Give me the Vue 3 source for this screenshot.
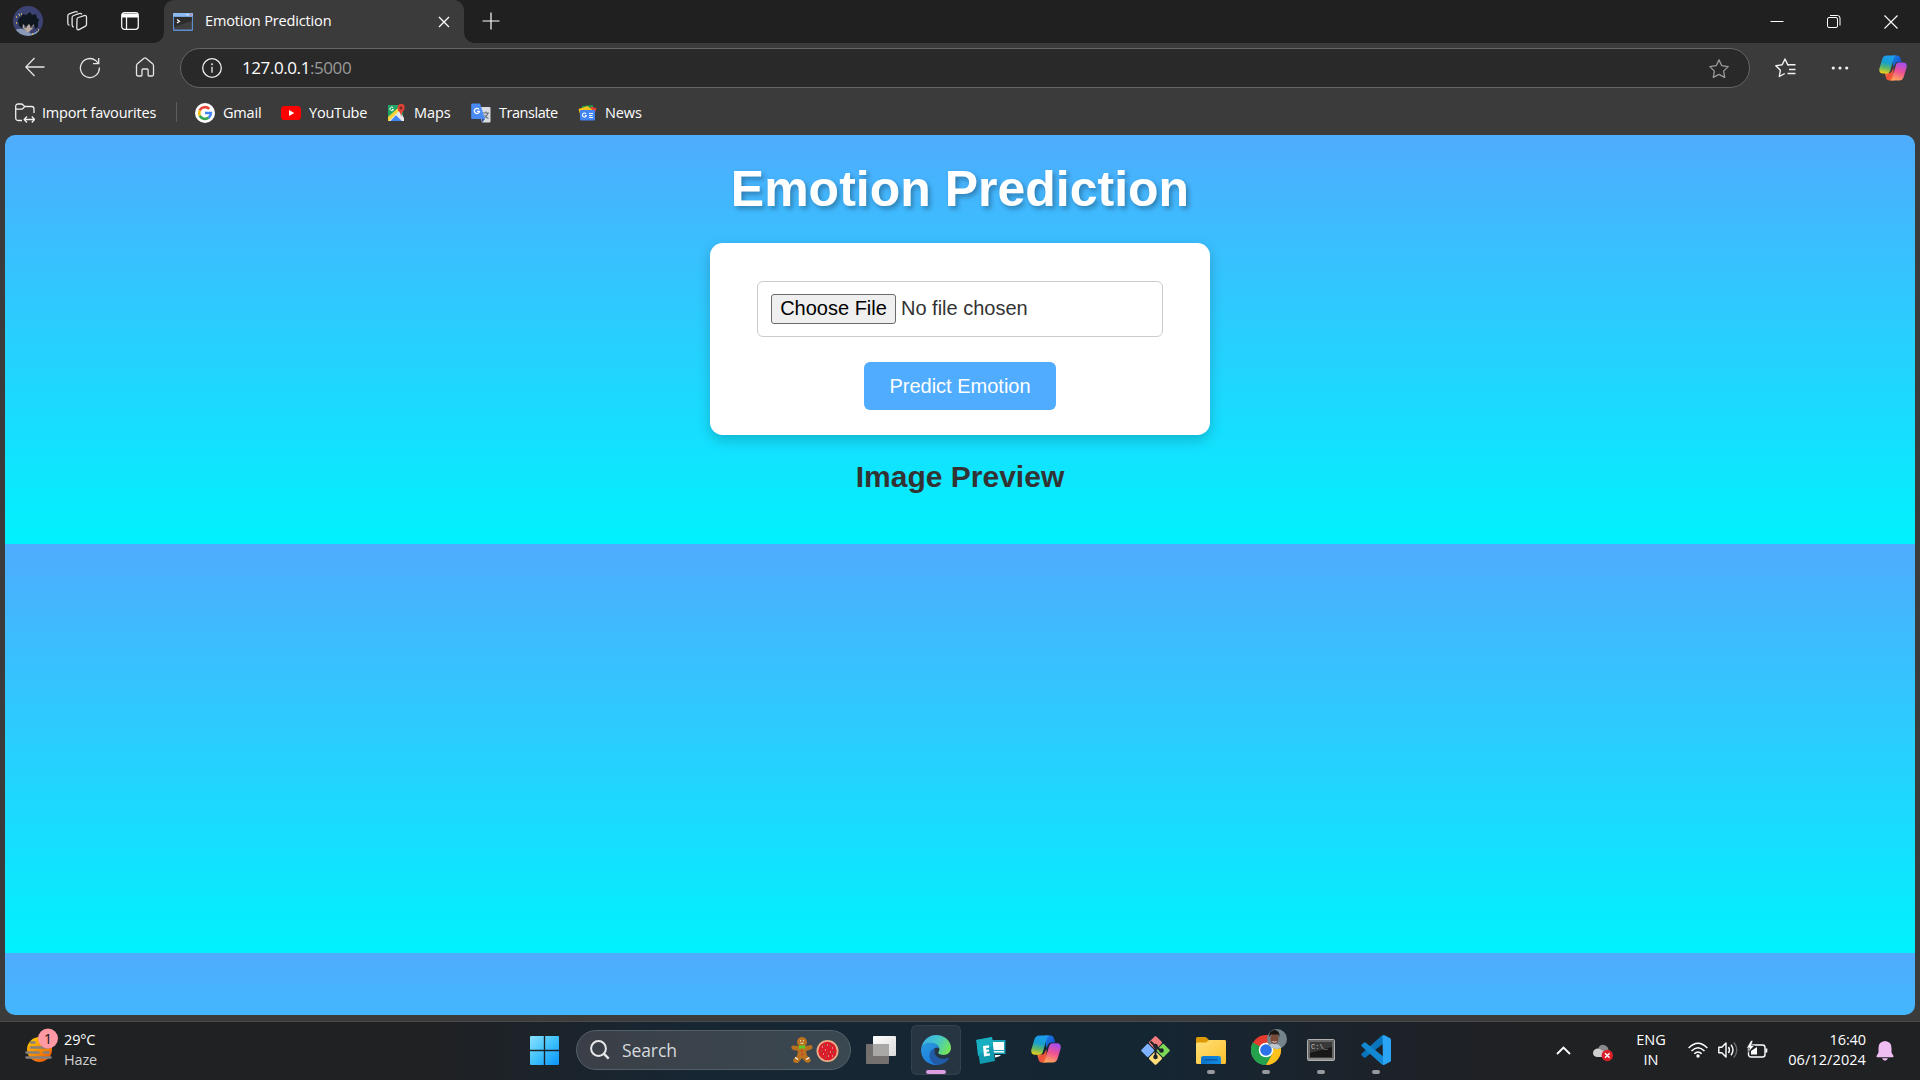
<script setup>
const bookmarks = ['Gmail', 'YouTube', 'Maps', 'Translate', 'News']
</script>

<template>
  <div class="desktop">
    <svg class="defs" width="0" height="0">
      <defs>
        <linearGradient id="cpBlue" x1="0.5" y1="0" x2="0.3" y2="1">
          <stop offset="0" stop-color="#1d9cf0" /><stop offset="0.4" stop-color="#189fcf" /><stop offset="0.7" stop-color="#5fb866" /><stop offset="1" stop-color="#f2cf1b" />
        </linearGradient>
        <linearGradient id="cpPink" x1="0.7" y1="0" x2="0.4" y2="1">
          <stop offset="0" stop-color="#a44df0" /><stop offset="0.5" stop-color="#ee5192" /><stop offset="1" stop-color="#fda45c" />
        </linearGradient>
        <linearGradient id="cpNavy" x1="0" y1="0" x2="1" y2="1">
          <stop offset="0" stop-color="#1c85e8" /><stop offset="1" stop-color="#1240c4" />
        </linearGradient>
        <linearGradient id="cpRed" x1="0" y1="0" x2="1" y2="1">
          <stop offset="0" stop-color="#f8b13c" /><stop offset="0.5" stop-color="#ee4e3a" /><stop offset="1" stop-color="#f0703c" />
        </linearGradient>
        <symbol id="copilot" viewBox="0 0 30 28">
          <path d="M14 .5h5.500c2 0 3 1 3.500 3l1.200 4h-3.600c-2 0-3.100.9-3.700 2.800l-1.600 3z" fill="url(#cpNavy)" />
          <path d="M16 27.500h-5c-2 0-3-1-3.500-3l-1.300-5h4.300c1.800 0 2.800-.7 3.400-2.600l1.500-3z" fill="url(#cpRed)" />
          <path d="M8.500.5h10c-1.500.3-2.300 1.500-2.900 3.500l-3.600 12.600c-.7 2.300-1.700 3.200-4 3.200H4C1 19.800-.3 17.500.4 14.600L3.200 5C4.100 2 5.500.5 8.500.5z" fill="url(#cpBlue)" />
          <path d="M21.500 27.500h-10c1.500-.3 2.300-1.500 2.900-3.500L18 11.400c.7-2.300 1.700-3.200 4-3.200h4c3 0 4.300 2.300 3.600 5.200L26.800 23c-.9 3-2.300 4.500-5.300 4.500z" fill="url(#cpPink)" />
        </symbol>
      </defs>
    </svg>

    <!-- Browser window -->
    <header class="tabstrip">
      <svg class="avatar" viewBox="0 0 30 30">
        <defs><clipPath id="av"><circle cx="15" cy="15" r="15" /></clipPath></defs>
        <g clip-path="url(#av)">
          <rect width="30" height="30" fill="#3c4372" />
          <path d="M0 25q5-3 10-2l9 5 5-3 6 1v4H0z" fill="#8799b4" />
          <path d="M9 17h12l-1 5-4 4h-2l-4-4z" fill="#b9a8a2" />
          <path d="M6 20 5 14l2-3 1 0 2-3 3 1 4-3 2 3 4-1 1 4 2 1-1 4 0 4-3 2-1-5-3 3-2-3-3 3-3-3-1 4z" fill="#10181f" />
          <path d="M11 21h3M17 21h3" stroke="#232b33" />
          <path d="M3 11h1M6 9h1M8 8h1M3 17h1M19 28h1M25 24h1" stroke="#e9c64f" stroke-width="1.300" />
          <path d="M5 8h1M22 27h1" stroke="#58b8e8" />
        </g>
      </svg>
      <svg class="workspaces" viewBox="0 0 22 22" fill="none" stroke="#e4e4e4" stroke-width="1.300" stroke-linejoin="round">
        <path d="M11 9.500q-.1-1.500 1.400-2l5.800-1.900q2.300-.6 2.300 1.600v7.300q0 1.300-1.400 1.900L13 19.600q-2.200.7-2.200-1.500z" />
        <path d="M7.800 17.200q-1.700-.3-1.700-2.500V7.600q0-1.500 1.500-2.100L13 3.600q1.700-.6 3 .6" />
        <path d="M3.500 15.300q-1.700-.3-1.700-2.400V6q0-1.600 1.500-2.200L8.700 1.900q1.700-.6 2.900.4" />
      </svg>
      <svg class="vtabs" viewBox="0 0 18 18" fill="none" stroke="#f4f4f4" stroke-width="1.300">
        <rect x=".7" y=".7" width="16.600" height="16.600" rx="2.800" />
        <path d="M1 1.500h16v4H1z" fill="#fff" stroke="none" /><path d="M5.500 5v12" />
      </svg>
      <div class="tab">
        <svg class="favicon" viewBox="0 0 20 18">
          <rect width="20" height="18" rx="1" fill="#5d8fcf" /><rect y="0" width="20" height="3.500" rx="1" fill="#8fbaf0" />
          <rect x="17" y="1" width="1.500" height="1.500" fill="#d86a6a" /><rect x="13" y="1" width="3" height="1.500" fill="#b8d4f6" />
          <rect x="1.200" y="4" width="17.600" height="12.500" fill="#3f3f3f" /><path d="M1.200 4h17.600v4L1.200 14z" fill="#2c2c2c" />
          <path d="M4 6.500l2.500 1.800L4 10" fill="none" stroke="#fff" stroke-width="1.200" />
        </svg>
        <span class="tab-title">Emotion Prediction</span>
        <svg class="tab-close" viewBox="0 0 12 12" stroke="#fff" stroke-width="1.300"><path d="M1 1l10 10M11 1L1 11" /></svg>
      </div>
      <svg class="newtab" viewBox="0 0 18 18" stroke="#fff" stroke-width="1.200"><path d="M9 .5v17M.5 9h17" /></svg>
      <div class="winctl">
        <svg viewBox="0 0 14 14" stroke="#fff" stroke-width="1"><path d="M.5 6.500h13" /></svg>
        <svg viewBox="0 0 14 14" stroke="#fff" stroke-width="1" fill="none"><rect x=".5" y="2.500" width="10" height="10" rx="1.500" /><path d="M3 .5h7.500q2.500 0 2.500 2.500V10.500" /></svg>
        <svg viewBox="0 0 14 14" stroke="#fff" stroke-width="1.100"><path d="M.5.5l13 13M13.500.5l-13 13" /></svg>
      </div>
    </header>

    <div class="toolbar">
      <svg class="back" viewBox="0 0 20 20" fill="none" stroke="#e6e6e6" stroke-width="1.300"><path d="M19.500 10H1M9.500 1L.8 10l8.700 9" /></svg>
      <svg class="reload" viewBox="0 0 22 22" fill="none" stroke="#e6e6e6" stroke-width="1.300"><path d="M20.400 10.500A9.500 9.500 0 1 1 16.600 3.400l2.900 3M19.700 1v5.700H14" /></svg>
      <svg class="home" viewBox="0 0 20 20" fill="none" stroke="#e6e6e6" stroke-width="1.300" stroke-linejoin="round"><path d="M1.500 8.600q0-.9.600-1.500L9 1.200q1-.8 2 0l6.900 5.900q.6.600.6 1.500v9q0 1.400-1.400 1.400h-3q-1 0-1-1v-5q0-1-1-1H8q-1 0-1 1v5q0 1-1 1H2.900q-1.400 0-1.400-1.400z" /></svg>
      <div class="address">
        <svg class="info" viewBox="0 0 20 20" fill="none" stroke="#eee" stroke-width="1.300"><circle cx="10" cy="10" r="9.300" /><path d="M10 8.800v6" /><circle cx="10" cy="6.200" r=".6" fill="#eee" stroke-width=".8" /></svg>
        <span class="url">127.0.0.1<i>:5000</i></span>
        <svg class="fav" viewBox="0 0 20 20" fill="none" stroke="#9b9b9b" stroke-width="1.300" stroke-linejoin="round"><path d="M10 .9l2.800 5.800 6.400.9-4.600 4.500 1.100 6.300-5.700-3-5.700 3 1.100-6.300L.8 7.600l6.400-.9z" /></svg>
      </div>
      <svg class="favs" viewBox="0 0 21 20" fill="none" stroke="#f2f2f2" stroke-width="1.400" stroke-linejoin="round"><path d="M14 7.200l-1.200-.3L10 1 7.200 6.800.8 7.700l4.600 4.500-1.100 6.300 5.500-3M13 6.800h7.500M14 11.500h6.500M12.500 15.500h8" /></svg>
      <svg class="more" viewBox="0 0 18 4" fill="#f2f2f2"><circle cx="2.300" cy="2" r="1.600" /><circle cx="9" cy="2" r="1.600" /><circle cx="15.700" cy="2" r="1.600" /></svg>
      <svg class="cp-top"><use href="#copilot" /></svg>
    </div>

    <nav class="bookmarks">
      <span class="bm imp">
        <svg viewBox="0 0 20 20" fill="none" stroke="#f0f0f0" stroke-width="1.300" stroke-linejoin="round"><path d="M7 17.500H3.200Q.7 17.500.7 15V3.400Q.7 1 3.200 1h3q1 0 1.700.8l1.700 1.700h7q2.400 0 2.400 2.500v4M.8 6.200h5.400q1 0 1.700-.7l1.800-1.900M9.500 16.500h10M12 13.500l-2.800 3 2.800 3M16.800 13.500l2.800 3-2.800 3" /></svg>
        <span>Import favourites</span>
      </span>
      <i class="sep"></i>
      <span v-for="b in bookmarks" :key="b" class="bm">
        <svg v-if="b === 'Gmail'" viewBox="0 0 20 20"><circle cx="10" cy="10" r="10" fill="#fff" /><g fill="none" stroke-width="2.600"><path d="M14.200 5.900A5.900 5.900 0 0 0 4.700 7.400" stroke="#ea4335" /><path d="M4.800 7.300a5.900 5.900 0 0 0 0 5.400" stroke="#fbbc05" /><path d="M4.700 12.600a5.900 5.900 0 0 0 9 2" stroke="#34a853" /><path d="M13.600 14.700A5.900 5.900 0 0 0 15.900 10H10" stroke="#4285f4" /></g></svg>
        <svg v-else-if="b === 'YouTube'" viewBox="0 0 20 20"><rect y="3" width="20" height="14" rx="3.600" fill="#f00" /><path d="M8 7l5.300 3L8 13z" fill="#fff" /></svg>
        <svg v-else-if="b === 'Maps'" viewBox="0 0 20 20"><path d="M2 2h15v16H2z" fill="#1fa463" /><path d="M2 18L13 7l5 8v3z" fill="#e8e8e8" /><path d="M2 14v4h1L14 7l-2-2z" fill="#fdd43a" /><path d="M4.500 18L10 12.300l5.800 5.700z" fill="#4285f4" /><path d="M15 14q0-4-3-6.500Q10.500 1 15 .8q5 .2 3.200 6Q15.500 9.500 15 14z" fill="#db4437" /><circle cx="15" cy="5" r="1.400" fill="#7b231e" /><path d="M7.200 4.800A1.800 1.800 0 1 0 7.500 6.500H6" fill="none" stroke="#fff" /></svg>
        <svg v-else-if="b === 'Translate'" viewBox="0 0 20 20"><path d="M8 4h10.500q1 0 1 1v13.500q0 1-1 1H11z" fill="#d9dce1" /><path d="M12 10h6M15 8.500V10M17 10q-1 3.500-4 5M13.500 12q1.500 2.500 4 3.500" fill="none" stroke="#62707b" stroke-width="1.100" /><path d="M1.200.5H9l5 15.500H1.200Q.2 16 .2 15V1.500q0-1 1-1z" fill="#4a8af4" /><path d="M11 16h3l-3 3.500z" fill="#3054a8" /><path d="M8 6.300A2.600 2.600 0 1 0 8.500 8.400H6" fill="none" stroke="#fff" stroke-width="1.300" /></svg>
        <svg v-else viewBox="0 0 20 20"><path d="M5 3l11-1v7H5z" fill="#1a9c4a" /><path d="M14 3.500l5.500 1.800-3 9-5-3z" fill="#e04436" /><path d="M1.500 6l9-3 5 4v7l-12-1z" fill="#fbc21d" /><rect x="3" y="7" width="15" height="10.500" rx="1" fill="#4285f4" /><path d="M9 10.800a2 2 0 1 0 .4 1.700H8M12 10.500h4M12 12.500h3.500M12 14.500h4" fill="none" stroke="#fff" stroke-width="1.100" /></svg>
        <span :class="'t-' + b.toLowerCase()">{{ b }}</span>
      </span>
    </nav>

    <main class="viewport">
      <h1>Emotion Prediction</h1>
      <form class="card" @submit.prevent>
        <div class="file"><button type="button" class="choose">Choose File</button><span>No file chosen</span></div>
        <button class="predict">Predict Emotion</button>
      </form>
      <h2>Image Preview</h2>
    </main>

    <!-- Taskbar -->
    <footer class="taskbar">
      <div class="weather">
        <svg viewBox="0 0 36 36">
          <defs><linearGradient id="sun" x1="0" y1="0" x2="0.700" y2="1"><stop offset="0" stop-color="#ffd200" /><stop offset="1" stop-color="#ee5c07" /></linearGradient></defs>
          <circle cx="15.500" cy="21.500" r="12.500" fill="url(#sun)" />
          <path d="M7 14.500h3.500M7 19.500h17M2.500 24.500h12M20 24.500h4.500M2.500 29.500h24" stroke="#85807c" stroke-width="2.500" stroke-linecap="round" />
          <circle cx="24" cy="10.500" r="10" fill="#ff99a4" />
          <text x="24" y="15.500" text-anchor="middle" font-size="14" fill="#111">1</text>
        </svg>
        <div class="wtext"><b>29°C</b><span>Haze</span></div>
      </div>
      <span class="slot start">
        <svg width="29" height="29" viewBox="0 0 29 29">
          <defs><linearGradient id="win" gradientUnits="userSpaceOnUse" x1="0" y1="0" x2="29" y2="29"><stop offset="0" stop-color="#8be2ff" /><stop offset="0.500" stop-color="#3fc1fb" /><stop offset="1" stop-color="#0a93f8" /></linearGradient></defs>
          <path d="M0 1q0-1 1-1h12.800v13.800H0zM15.200 0H28q1 0 1 1v12.800H15.200zM0 15.200h13.800V29H1q-1 0-1-1zM15.200 15.200H29V28q0 1-1 1H15.200z" fill="url(#win)" />
        </svg>
      </span>
      <div class="search">
        <svg width="20" height="20" viewBox="0 0 20 20" fill="none" stroke="#e9e9e9" stroke-width="2"><circle cx="8.500" cy="8.500" r="7.400" /><path d="M13.700 13.700l5 5" stroke-width="2.400" /></svg>
        <span>Search</span>
        <svg class="cookie" width="48" height="28" viewBox="0 0 48 28">
          <g fill="#b8711f"><circle cx="11" cy="6" r="5" /><path d="M2 9.500q-2 0-1.700 2t2.400 2.500L7 15l-1 5-3.500 3q-1 2.500 1 3.500t4 0L11 22l3.500 4q2 1.300 4 .2t1-3L16 19.500l-1-4.500 5-1.500q2-.8 1.500-2.800t-2.500-1.500L14 10H8z" /></g>
          <path d="M8.500 9.500l2.500 1 2.500-1v3l-2.500-1-2.500 1z" fill="#54cf2a" stroke="#54cf2a" /><path d="M9 4.800h1M12 4.800h1M4 21.500l3 2M15 23.500l3.500-2" stroke="#fff" stroke-width="1.100" /><path d="M9.500 7q1.500 1 3 0" stroke="#fff" fill="none" stroke-width=".8" /><circle cx="11" cy="15" r="1" fill="#d13a2a" /><circle cx="11" cy="18.500" r="1" fill="#d13a2a" />
          <circle cx="36.500" cy="15" r="11" fill="#e9ae87" /><circle cx="36.500" cy="15" r="9.200" fill="#dc1c2a" />
          <path d="M31 11h1M36 9h1M41 12h1M34 14h1M39 16h1M32 18h1M37 20h1M41 20h1" stroke="#fbe3d2" stroke-width="1" /><path d="M33 9h1M39 10h1M30 15h1M36 17h1M42 16h1M34 21h1" stroke="#35a343" stroke-width="1" />
        </svg>
      </div>
      <span class="slot first">
        <svg width="30" height="28" viewBox="0 0 30 28"><defs><linearGradient id="tv" x1="0" y1="0" x2="1" y2="1"><stop offset="0" stop-color="#fff" /><stop offset="1" stop-color="#dadada" /></linearGradient></defs><rect x="7" width="23" height="20" rx="1" fill="url(#tv)" /><rect y="8" width="23" height="20" rx="1" fill="#74706f" /><path d="M7 8h16v12H7z" fill="#aaa7a7" /></svg>
      </span>
      <span class="slot active">
        <svg width="30" height="30" viewBox="0 0 30 30">
          <defs>
            <linearGradient id="eg" x1="0" y1="0.200" x2="1" y2="0.600"><stop offset="0" stop-color="#2da8e6" /><stop offset="0.500" stop-color="#35c3c7" /><stop offset="1" stop-color="#6be24a" /></linearGradient>
            <linearGradient id="eb" x1="0" y1="0" x2="0.500" y2="1"><stop offset="0" stop-color="#1b92dc" /><stop offset="1" stop-color="#0c73d8" /></linearGradient>
          </defs>
          <path d="M.3 13.500C1.500 5.500 7.500 0 15 0c8.500 0 15 6 15 12.800 0 4.700-3.500 7.200-7.500 7.200-3 0-5.300-1-5.300-2.200 0-.8 1.200-1.400 1.200-3.600 0-3.600-4-6.200-8.900-6.200-4 0-7.500 1.800-9.200 5.500z" fill="url(#eg)" />
          <path d="M0 15C0 10.500 4 7.800 9.500 7.800c4.500 0 8.500 2.500 8.900 5.700-1-1-3-1.500-5-.2-3.400 2.200-3.500 7.500 0 11.200 2 2.200 4.500 3.500 7.600 4-2 1-4 1.500-6 1.500-8.500 0-15-6.500-15-15z" fill="url(#eb)" />
          <path d="M13.400 13.300c-3 1.200-4.900 3.700-4.900 7C8.500 25.500 12.500 30 17 29.900c4.800-.3 8.700-2.700 11-6.400.3-.6-.2-1-.8-.7-5 2.400-11.700.6-13.300-4.300-.6-2-.3-3.800.5-5.200z" fill="#114f9f" />
        </svg>
      </span>
      <span class="slot">
        <svg width="30" height="28" viewBox="0 0 30 28"><path d="M16 4h13.500v14H16z" fill="#18a0b4" /><path d="M17 6h11v8H17zM16 15h12v1.500H16zM19 19h6l-2 1.500-4 1z" fill="#fff" /><path d="M.3 4L16 1l3 24-15 3z" fill="#129bb0" /><path d="M.3 4L16 1l1 8L2 20z" fill="#19afc2" /><path d="M7 10l6-.8.200 2.500-3 .4.200 1.600 2.600-.3.200 2.200-2.600.3.200 1.600 3-.3.200 2.400-6 .8z" fill="#fff" /></svg>
      </span>
      <span class="slot"><svg width="30" height="28" class="cp-up"><use href="#copilot" /></svg></span>
      <span class="slot"></span>
      <span class="slot">
        <svg class="git" width="31" height="31" viewBox="0 0 31 31"><g transform="rotate(45 15.500 15.500)"><rect x="5" y="5" width="10" height="10" rx="1.200" fill="#f47c7c" /><rect x="16" y="5" width="10" height="10" rx="1.200" fill="#7ed957" /><rect x="5" y="16" width="10" height="10" rx="1.200" fill="#80b3ff" /><rect x="16" y="16" width="10" height="10" rx="1.200" fill="#ffdd78" /></g><path d="M10.500 6.500l5 5v11M15.500 11l5.500 5" stroke="#1d232a" stroke-width="2" fill="none" /><circle cx="15.500" cy="11" r="2.300" fill="#1d232a" /><circle cx="21.500" cy="15.500" r="2.300" fill="#1d232a" /><circle cx="15.500" cy="22" r="2.300" fill="#1d232a" /></svg>
      </span>
      <span class="slot run">
        <svg width="30" height="27" viewBox="0 0 30 27"><defs><linearGradient id="fd" x1="0" y1="0" x2="1" y2="1"><stop offset="0" stop-color="#ffe07a" /><stop offset="1" stop-color="#fbc02a" /></linearGradient><linearGradient id="fb" x1="0" y1="0" x2="1" y2="0"><stop offset="0" stop-color="#0a74cc" /><stop offset="1" stop-color="#128be0" /></linearGradient></defs><path d="M0 1.500Q0 0 1.500 0H9q1 0 1.700.7L13 3h15q2 0 2 2v10H0z" fill="#dd9a05" /><path d="M0 7q0-1.500 1.500-1.500H10L13 3h15.500Q30 3 30 4.500v21q0 1.500-1.500 1.500h-27Q0 27 0 25.500z" fill="url(#fd)" /><path d="M5 27v-5.500q0-2.500 2.500-2.500h15q2.500 0 2.500 2.500V27z" fill="url(#fb)" /><path d="M8.500 22.800h13" stroke="#0b529b" stroke-width="1.200" /></svg>
      </span>
      <span class="slot run chrome">
        <svg width="36" height="36" viewBox="0 0 36 36">
          <circle cx="15" cy="21" r="15" fill="#e33b2e" /><path d="M2 13.500A15 15 0 0 0 15 36l6.500-11.300z" fill="#1e9e4a" /><path d="M2 13.500l6.500 11.300L15 28.500 21.500 24.700 15 36A15 15 0 0 1 2 13.500z" fill="#24a24e" /><path d="M15 13.500h13A15 15 0 0 1 15 36l6.500-11.300z" fill="#fcc31e" />
          <circle cx="15" cy="21" r="7.300" fill="#fff" /><circle cx="15" cy="21" r="5.800" fill="#2a73e8" />
          <defs><clipPath id="ph"><circle cx="26" cy="10" r="10" /></clipPath></defs>
          <g clip-path="url(#ph)"><rect x="16" width="20" height="20" fill="#75848a" /><path d="M16 20l2-4 5-2 5 2 4 5z" fill="#b9c6cf" /><ellipse cx="23.500" cy="9.500" rx="4" ry="5.800" fill="#7a4b38" /><path d="M18 8q0-6.500 5.500-7 5.500.5 5 7l-1.500-2.500h-7z" fill="#191614" /><path d="M21.500 12.500q2 1.500 4 0" stroke="#ddd" fill="none" /></g>
        </svg>
      </span>
      <span class="slot run">
        <svg width="28" height="22" viewBox="0 0 28 22"><rect x=".5" y=".5" width="27" height="21" rx="1" fill="#666" stroke="#b0b0b0" /><path d="M1 19h26v2H1z" fill="#8a8a8a" /><rect x="3" y="3" width="22" height="15.500" fill="#181818" /><path d="M3 3h22v5L3 14z" fill="#393939" /><text x="4" y="9.500" font-size="7" fill="#c4c4c4" class="mono">C:\_</text></svg>
      </span>
      <span class="slot run">
        <svg width="30" height="30" viewBox="0 0 30 30"><path d="M22 .3v8.500L4.500 22.500q-.8.600-1.500 0L.6 20.300q-.8-.8 0-1.600L20 1.200z" fill="#0a75bd" /><path d="M22 29.700v-8.500L4.500 7.500Q3.700 6.900 3 7.500L.6 9.700q-.8.800 0 1.600L20 28.800z" fill="#1287d2" /><path d="M21.500.4Q22.500-.2 23.500.3l5.300 2.600Q30 3.500 30 4.800v20.400q0 1.300-1.200 1.900l-5.300 2.600q-1 .5-2-.1l.5-.6z" fill="#2aa4f4" /></svg>
      </span>

      <div class="tray">
        <svg class="chev" width="15" height="9" viewBox="0 0 15 9" fill="none" stroke="#fff" stroke-width="1.800"><path d="M1 8l6.500-6.500L14 8" /></svg>
        <svg class="cloud" width="20" height="18" viewBox="0 0 20 18"><path d="M5 5Q7 0 11 1q4 1 4.500 5 3 1 2.500 4H8z" fill="#8a8a8a" /><path d="M4 13q-4-.5-4-4t4-4.500q3.500 0 5 2 4 0 5 5l-2 1.500z" fill="#cfcfcf" /><circle cx="14.300" cy="11.500" r="5.700" fill="#d81f2a" /><path d="M12 9.200l4.600 4.600M16.600 9.200L12 13.800" stroke="#fff" stroke-width="1.400" /></svg>
        <div class="lang"><span>ENG</span><span>IN</span></div>
        <svg class="wifi" width="20" height="16" viewBox="0 0 20 16" fill="none" stroke="#fff" stroke-width="1.500"><path d="M.7 6q9.300-9.500 18.600 0M3.500 9q6.500-6.700 13 0M6.300 11.800q3.700-3.800 7.400 0" /><circle cx="10" cy="14" r="1.700" fill="#fff" stroke="none" /></svg>
        <svg class="vol" width="20" height="18" viewBox="0 0 20 18" fill="none" stroke="#fff" stroke-width="1.400" stroke-linejoin="round"><path d="M.8 6.200h3L8 2v14l-4.200-4.200h-3zM10.500 6q2 3 0 6M13 3.800q4 5.200 0 10.400" /><path d="M15.800 1.500q6 7.500 0 15" stroke="#6a6a6a" /></svg>
        <svg class="bat" width="21" height="17" viewBox="0 0 21 17"><rect x="1.500" y="4" width="16.500" height="12" rx="2.500" fill="none" stroke="#fff" stroke-width="1.400" /><path d="M18.500 7.500h1.800v4h-1.800zM4 13.500v-3.500L10 6v7.500z" fill="#fff" /><path d="M4-.5L-.5 7H2.500L1 11.500 7.500 4.500H4.500L6-.5z" fill="#fff" stroke="#202124" stroke-width=".6" /></svg>
        <div class="clock"><span>16:40</span><span class="date">06/12/2024</span></div>
        <svg class="bell" width="18" height="20" viewBox="0 0 18 20" fill="#f0bdf3"><path d="M9 0q6.500.5 6.500 7v4.500l2 3.500q.3 1.200-1 1.200H1.500q-1.300 0-1-1.200l2-3.500V7Q2.500.5 9 0zM6 17.300h6q-1 2.400-3 2.400t-3-2.400z" /></svg>
      </div>
    </footer>
  </div>
</template>

<style>
html, body { margin: 0; overflow: hidden; background: #3b3b3b; }
</style>

<style scoped>
* { box-sizing: border-box; }
.desktop { width: 1920px; height: 1080px; display: flex; flex-direction: column; background: #3b3b3b; font-family: "Open Sans", "Noto Sans", sans-serif; color: #fff; overflow: hidden; }
.desktop svg { display: block; flex: none; }
.desktop .defs { position: absolute; }

.tabstrip { height: 43px; flex: none; display: flex; background: #202020; }
.avatar { width: 30px; height: 30px; margin: 6px 0 0 13px; }
.workspaces { width: 22px; height: 22px; margin: 10px 0 0 23px; }
.vtabs { width: 18px; height: 18px; margin: 12px 0 0 33px; }
.tab { position: relative; width: 300px; margin-left: 25px; background: #3b3b3b; border-radius: 10px 10px 0 0; display: flex; }
.tab::before, .tab::after { content: ""; position: absolute; bottom: 0; width: 10px; height: 10px; }
.tab::before { left: -10px; background: radial-gradient(circle at 0 0, transparent 9.500px, #3b3b3b 10px); }
.tab::after { right: -10px; background: radial-gradient(circle at 100% 0, transparent 9.500px, #3b3b3b 10px); }
.favicon { width: 20px; height: 18px; margin: 13px 0 0 9px; }
.tab-title { width: 233px; margin: 10px 0 0 12px; font-size: 14.500px; line-height: 21px; letter-spacing: -.15px; white-space: nowrap; }
.tab-close { width: 12px; height: 12px; margin-top: 16px; }
.newtab { width: 18px; height: 18px; margin: 12px 0 0 18px; }
.winctl { margin: 15px 22px 0 auto; display: flex; gap: 43px; }
.winctl svg { width: 14px; height: 14px; }

.toolbar { height: 50px; flex: none; display: flex; align-items: flex-start; }
.back { width: 20px; height: 20px; margin: 14px 0 0 25px; }
.reload { width: 22px; height: 22px; margin: 14px 0 0 34px; }
.home { width: 20px; height: 20px; margin: 14px 0 0 34px; }
.address { width: 1570px; height: 40px; margin: 5px 0 0 25px; border: 1px solid #666; border-radius: 20px; background: #292929; display: flex; align-items: center; }
.info { width: 20px; height: 20px; margin-left: 21px; }
.url { margin-left: 20px; font-size: 17px; line-height: 24px; letter-spacing: -.42px; }
.url i { font-style: normal; color: #9a9a9a; }
.fav { width: 20px; height: 20px; margin: 1px 20px 0 auto; }
.favs { width: 21px; height: 20px; margin: 15px 0 0 25px; }
.more { width: 18px; height: 4px; margin: 23px 0 0 35px; }
.cp-top { width: 28px; height: 26px; margin: 12px 0 0 30px; }

.bookmarks { height: 42px; flex: none; padding: 9px 0 0 15px; display: grid; grid-template-columns: 161px 19px 86px 105px 85px 106px auto; align-items: start; font-size: 14.500px; line-height: 21px; }
.bm { display: flex; gap: 8px; white-space: nowrap; }
.imp { gap: 7px; }
.bm svg { width: 20px; height: 20px; margin-top: 1px; }
.sep { width: 1px; height: 20px; background: #5c5c5c; }
.bm > span { letter-spacing: -.2px; }
.bm > .t-translate { letter-spacing: -.45px; }
.bm > .t-maps, .bm > .t-news { letter-spacing: -.1px; }

.viewport { width: 1910px; height: 880px; flex: none; margin: 0 5px; padding-top: 25px; border-radius: 10px; background: linear-gradient(to bottom, #4facfe, #00f2fe) 0 0 / 100% 409px repeat-y; font-family: "Liberation Sans", Arial, sans-serif; color: #333; text-align: center; }
h1 { margin: 0 0 25px; font-size: 50px; line-height: 58px; color: #fff; text-shadow: 2.500px 2.500px 5px rgba(0, 0, 0, .3); }
.card { width: 500px; height: 192px; margin: 0 auto; padding: 38px 47px 25px; border-radius: 12.500px; background: #fff; box-shadow: 0 5px 12.500px rgba(0, 0, 0, .2); display: flex; flex-direction: column; align-items: center; }
.file { width: 406px; height: 56px; padding: 0 13px; border: 1px solid #ccc; border-radius: 6px; display: flex; align-items: center; font-size: 20px; }
.choose { width: 125px; height: 30px; margin: 0 5px 0 0; padding: 0 0 2px; border: 1px solid #6b6b6b; border-radius: 3px; background: #efefef; color: #000; font: 20px "Liberation Sans", Arial, sans-serif; white-space: nowrap; }
.file span { margin-top: -1px; }
.predict { width: 192px; height: 48px; margin-top: 25px; padding: 0; border: 0; border-radius: 6px; background: #4facfe; color: #fff; font: 20px "Liberation Sans", Arial, sans-serif; flex: none; }
h2 { margin: 25px 0 0; font-size: 30px; line-height: 34px; }

.taskbar { height: 59px; flex: none; margin-top: 6px; display: flex; border-top: 1px solid #494949; background: linear-gradient(90deg, #202123 0, #202123 22%, #172633 36%, #152633 60%, #1d2229 72%, #202123 80%); }
.weather { width: 517px; display: flex; }
.weather > svg { width: 36px; height: 36px; margin: 6px 0 0 24px; }
.wtext, .lang, .clock { display: flex; flex-direction: column; font-size: 14.500px; line-height: 20px; margin-top: 8px; }
.wtext { margin-left: 4px; letter-spacing: -.15px; }
.wtext b { font-weight: 400; }
.wtext span { color: #cfcfcf; }
.slot { width: 55px; height: 50px; margin-top: 3px; display: flex; align-items: center; justify-content: center; position: relative; }
.start { margin-right: 4px; }
.search { width: 275px; height: 40px; margin-top: 8px; border-radius: 20px; background: linear-gradient(90deg, #3b3f47, #3a4851); border: 1px solid #53606a; display: flex; align-items: center; }
.search > svg:first-child { margin: 0 0 1px 13px; }
.search span { margin-left: 12px; font-size: 17.500px; color: #d6dadd; letter-spacing: -.1px; }
.search .cookie { margin-left: auto; margin-right: 11px; }
.first { margin-left: 2.500px; }
.first svg { margin-bottom: 1px; }
.active::before { content: ""; position: absolute; inset: 0 2.500px; border-radius: 6px; background: rgba(255, 255, 255, .07); border: 1px solid rgba(255, 255, 255, .07); }
.active::after { content: ""; position: absolute; bottom: 1px; width: 20px; height: 4px; border-radius: 2px; background: #dd9de0; }
.cp-up { margin-bottom: 2px; }
.git { margin-right: 2px; }
.run::after { content: ""; position: absolute; bottom: 1px; width: 8px; height: 4px; border-radius: 2px; background: #98999c; }
.chrome svg { margin: -6px -6px 0 0; }
.mono { font-family: "Liberation Mono", monospace; }
.tray { margin-left: auto; margin-right: 26px; display: flex; }
.chev { margin: 24px 0 0; }
.cloud { margin: 22px 0 0 22px; }
.lang { width: 40px; margin-left: 18px; align-items: center; line-height: 20px; }
.wifi { margin: 20px 0 0 17px; }
.vol { margin: 19px 0 0 10px; }
.bat { margin: 19px 0 0 9px; overflow: visible; }
.clock { width: 80px; margin-left: 18px; align-items: flex-end; white-space: nowrap; letter-spacing: -.1px; }
.date { letter-spacing: .08px; }
.bell { margin: 19px 0 0 10px; }
</style>
